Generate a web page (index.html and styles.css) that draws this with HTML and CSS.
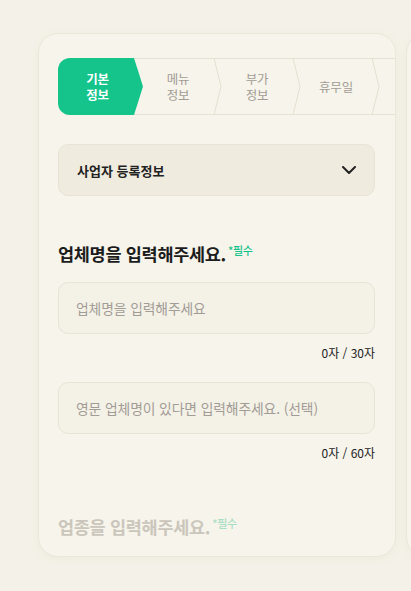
FILE: index.html
```html
<!DOCTYPE html>
<html lang="ko">
<head>
<meta charset="utf-8">
<link rel="stylesheet" href="styles.css">
</head>
<body>
<div class="carousel">
  <section class="card">
    <div class="steps">
      <div class="step step-active"><span class="step-label">기본<br>정보</span></div>
      <div class="step"><span class="step-label">메뉴<br>정보</span><svg class="chev" width="9" height="57" viewBox="0 0 9 57"><polyline points="1,0 8,28.5 1,57" fill="none" stroke="#e6dfd1" stroke-width="1"/></svg></div>
      <div class="step"><span class="step-label">부가<br>정보</span><svg class="chev" width="9" height="57" viewBox="0 0 9 57"><polyline points="1,0 8,28.5 1,57" fill="none" stroke="#e6dfd1" stroke-width="1"/></svg></div>
      <div class="step"><span class="step-label">휴무일</span><svg class="chev" width="9" height="57" viewBox="0 0 9 57"><polyline points="1,0 8,28.5 1,57" fill="none" stroke="#e6dfd1" stroke-width="1"/></svg></div>
      <div class="step"><span class="step-label"></span><svg class="chev" width="9" height="57" viewBox="0 0 9 57"><polyline points="1,0 8,28.5 1,57" fill="none" stroke="#e6dfd1" stroke-width="1"/></svg></div>
    </div>

    <div class="accordion">
      <span class="acc-title">사업자 등록정보</span>
      <svg width="14" height="8" viewBox="0 0 14 8"><polyline points="1,1 7,7 13,1" fill="none" stroke="#222" stroke-width="2" stroke-linecap="round" stroke-linejoin="round"/></svg>
    </div>

    <h2 class="q-title">업체명을 입력해주세요.<span class="req">*필수</span></h2>
    <div class="field"><span class="placeholder">업체명을 입력해주세요</span></div>
    <div class="counter">0자 / 30자</div>
    <div class="field field-2"><span class="placeholder">영문 업체명이 있다면 입력해주세요. (선택)</span></div>
    <div class="counter">0자 / 60자</div>

    <h2 class="q-title q-faded">업종을 입력해주세요.<span class="req">*필수</span></h2>
  </section>
  <section class="card card-next"></section>
</div>
</body>
</html>
```
FILE: styles.css
```css
* { box-sizing: border-box; }
html, body {
  margin: 0;
  padding: 0;
  background: #f4f2e8;
  font-family: "Noto Sans CJK KR", "Noto Sans", sans-serif;
  overflow: hidden;
}
.carousel {
  display: flex;
  gap: 10px;
  padding: 33px 0 0 38px;
  width: 411px;
  height: 591px;
  overflow: hidden;
}
.card {
  flex: 0 0 358px;
  height: 524px;
  background: #f6f4eb;
  border: 1px solid #ece7da;
  border-radius: 20px;
  box-shadow: 0 2px 8px rgba(160, 140, 100, 0.08);
  padding: 24px 20px 0 19px;
  overflow: hidden;
}
.steps {
  display: flex;
  height: 57px;
  margin-right: -20px;
  border-top: 1px solid #e8e1d3;
  border-bottom: 1px solid #e8e1d3;
  border-radius: 12px 0 0 12px;
}
.step {
  flex: 0 0 79px;
  display: flex;
  align-items: center;
  height: 55px;
}
.step-label {
  flex: 1;
  text-align: center;
  font-size: 12.5px;
  line-height: 16px;
  color: #a29c95;
  letter-spacing: -0.2px;
}
.chev {
  flex: 0 0 9px;
  margin: -1px 0;
}
.step-active {
  flex: 0 0 85px;
  height: 57px;
  margin: -1px 0;
  background: #14c48b;
  border-radius: 12px 0 0 12px;
  clip-path: polygon(0 0, 76px 0, 85px 50%, 76px 100%, 0 100%);
  padding-right: 6px;
}
.step-active .step-label {
  color: #ffffff;
  font-weight: 700;
}
.accordion {
  margin-top: 29px;
  height: 52px;
  display: flex;
  align-items: center;
  justify-content: space-between;
  padding: 0 18px 0 18px;
  background: #efebdf;
  border: 1px solid #e9e3d5;
  border-radius: 10px;
}
.acc-title {
  font-size: 13px;
  font-weight: 700;
  color: #222;
}
.q-title {
  margin: 46px 0 0 0;
  font-size: 17.5px;
  line-height: 24px;
  font-weight: 700;
  color: #1c1c1c;
  letter-spacing: -0.3px;
}
.req {
  font-size: 11px;
  line-height: 0;
  font-weight: 500;
  color: #14c48b;
  vertical-align: 6px;
  margin-left: 2px;
}
.field {
  margin-top: 16px;
  height: 52px;
  display: flex;
  align-items: center;
  padding: 0 17px;
  background: #f4f1e6;
  border: 1px solid #e9e3d6;
  border-radius: 10px;
}
.field-2 { margin-top: 20px; }
.placeholder {
  font-size: 13.8px;
  color: #a29c96;
  letter-spacing: -0.1px;
}
.counter {
  margin-top: 10px;
  text-align: right;
  font-size: 12px;
  line-height: 18px;
  color: #222;
}
.q-faded {
  margin-top: 53px;
  color: #cbc6bc;
}
.q-faded .req { color: #a9dec5; }
.card-next {
  padding: 0;
}
```
